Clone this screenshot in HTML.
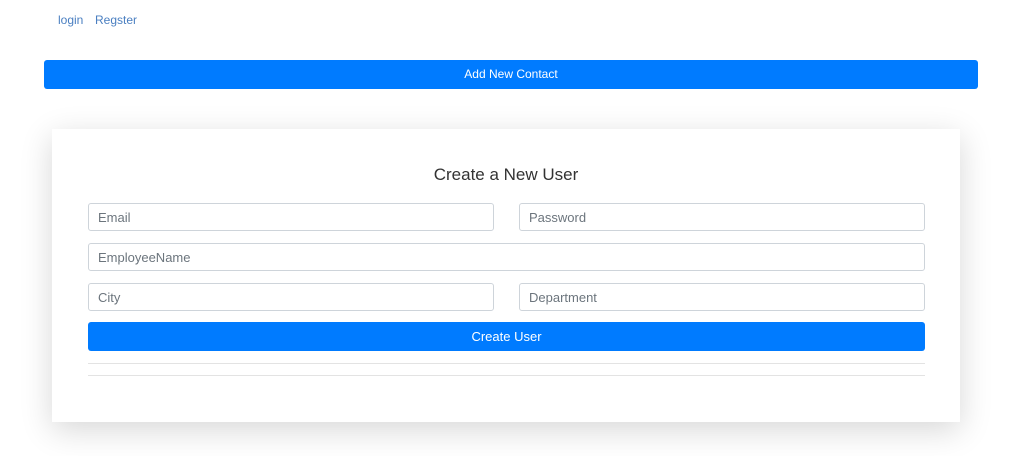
<!DOCTYPE html>
<html><head><meta charset="utf-8"><style>
*{box-sizing:border-box;margin:0;padding:0}
body{width:1024px;height:456px;background:#fff;font-family:"Liberation Sans",sans-serif;position:relative;overflow:hidden}
.a{position:absolute}
.nav{top:13px;font-size:12px;color:#4a7fc1}
.btn{background:#007bff;color:#fff;border-radius:3px;text-align:center;font-size:13px}
.card{left:52px;top:129px;width:908px;height:293px;background:#fff;box-shadow:0 8px 30px rgba(0,0,0,.16)}
.in{border:1px solid #ced4da;border-radius:3px;height:28px;font-size:13px;color:#6c757d;padding:6px 9px;background:#fff}
.line{height:1px;background:#e3e3e3;left:88px;width:837px}
</style></head><body>
<div class="a nav" style="left:58px">login</div>
<div class="a nav" style="left:95px">Regster</div>
<div class="a btn" style="left:44px;top:60px;width:934px;height:29px;line-height:29px;font-size:12px">Add New Contact</div>
<div class="a card"></div>
<div class="a" style="left:52px;width:908px;top:165px;text-align:center;font-size:17px;color:#333">Create a New User</div>
<div class="a in" style="left:88px;top:203px;width:406px">Email</div>
<div class="a in" style="left:519px;top:203px;width:406px">Password</div>
<div class="a in" style="left:88px;top:243px;width:837px">EmployeeName</div>
<div class="a in" style="left:88px;top:283px;width:406px">City</div>
<div class="a in" style="left:519px;top:283px;width:406px">Department</div>
<div class="a btn" style="left:88px;top:322px;width:837px;height:29px;line-height:29px">Create User</div>
<div class="a line" style="top:363px"></div>
<div class="a line" style="top:375px"></div>
</body></html>
